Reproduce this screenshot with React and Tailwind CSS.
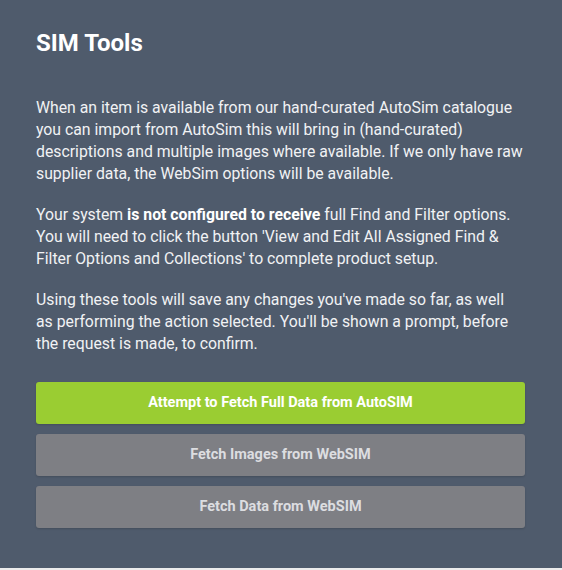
const buttons = [
  { label: "Attempt to Fetch Full Data from AutoSIM", primary: true },
  { label: "Fetch Images from WebSIM" },
  { label: "Fetch Data from WebSIM" },
];

export default function App() {
  return (
    <div className="min-h-[570px] bg-[#ececec] font-['Roboto',sans-serif]">
      <div className="h-[568px] bg-[#4f5b6c] pl-[36px] pr-[37px] pt-[27px] text-white">
        <h2 className="text-[24px] font-bold leading-[32px]">SIM Tools</h2>
        <div className="mr-[2px] mt-[38px] space-y-[19px] text-[15.8px] leading-[22px] text-[#f1f2f4]">
          <p>
            When an item is available from our hand-curated AutoSim catalogue you can import from AutoSim this will
            bring in (hand-curated) descriptions and multiple images where available. If we only have raw supplier
            data, the WebSim options will be available.
          </p>
          <p>
            Your system <strong className="font-bold text-white">is not configured to receive</strong> full Find and
            Filter options. You will need to click the button 'View and Edit All Assigned Find &amp; Filter Options and
            Collections' to complete product setup.
          </p>
          <p>
            Using these tools will save any changes you've made so far, as well as performing the action selected.
            You'll be shown a prompt, before the request is made, to confirm.
          </p>
        </div>
        <div className="mt-[27px] flex flex-col gap-[10px]">
          {buttons.map((b) => (
            <button
              key={b.label}
              className={`h-[42px] w-full rounded-[3px] text-[14.5px] font-bold shadow-[0_1px_2px_rgba(0,0,0,0.15)] ${
                b.primary ? "bg-[#9acd32] text-white" : "bg-[#7e7f84] text-[#dcdde0]"
              }`}
            >
              {b.label}
            </button>
          ))}
        </div>
      </div>
    </div>
  );
}
